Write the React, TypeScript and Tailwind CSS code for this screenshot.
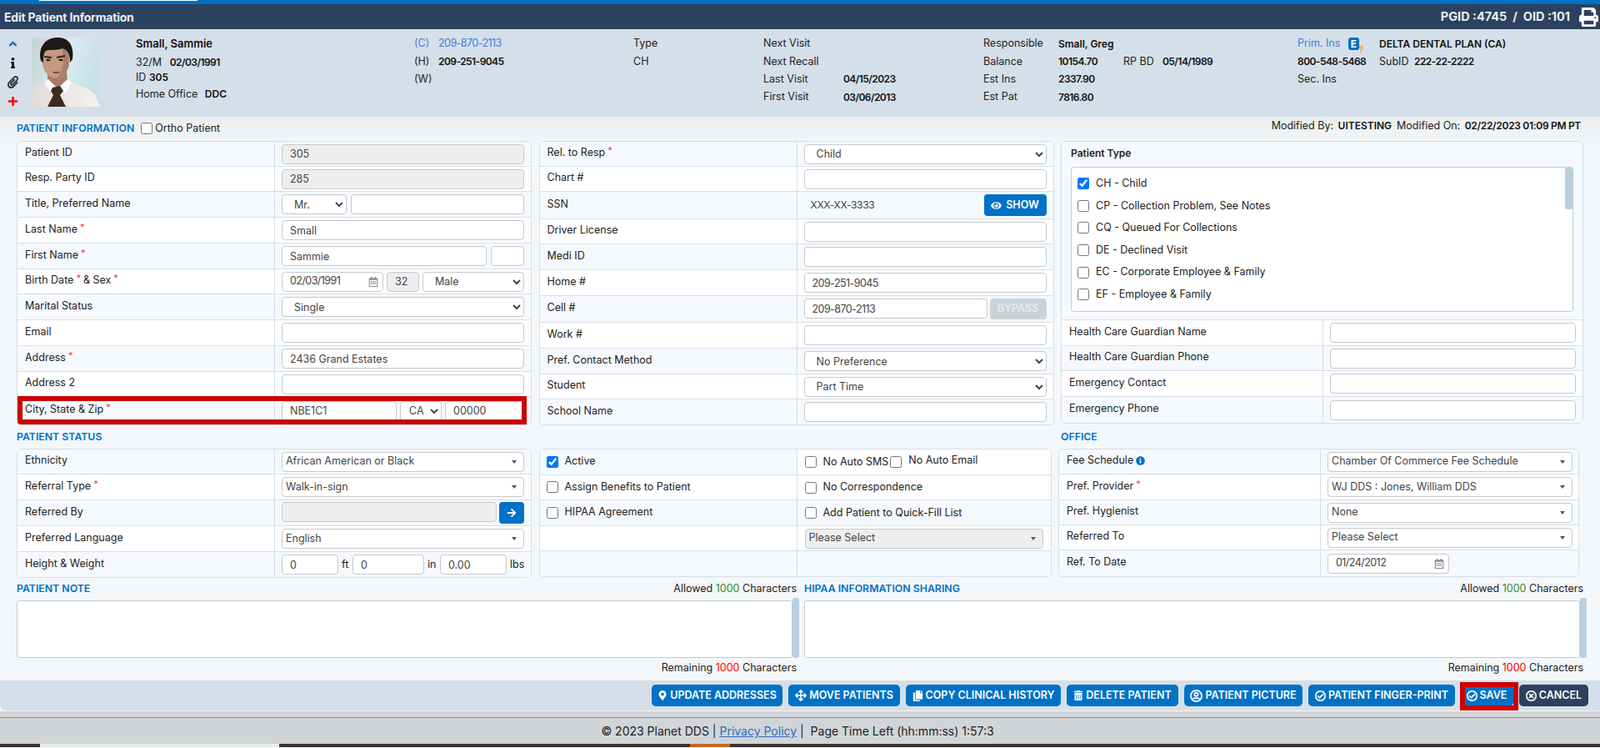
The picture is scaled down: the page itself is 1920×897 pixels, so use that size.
import type { ReactNode } from "react";
import {
  FaAngleUp,
  FaArrowRight,
  FaArrowsAlt,
  FaCopy,
  FaEye,
  FaInfo,
  FaInfoCircle,
  FaMapMarkerAlt,
  FaPaperclip,
  FaPlus,
  FaPrint,
  FaRegCalendarAlt,
  FaRegCheckCircle,
  FaRegTimesCircle,
  FaRegUserCircle,
  FaTrashAlt,
} from "react-icons/fa";

const inputCls =
  "h-[24px] rounded-[4px] border border-[#c6cacd] px-[9px] text-[12.5px] text-[#444] outline-none";
// Inter digits run wider than the original font's
const tight = "tracking-[-0.55px]";

function Req() {
  return <span className="relative -top-[3px] ml-[3px] text-[11px] text-[#e8413c]">*</span>;
}

function Row({
  h,
  label,
  labelW,
  shade,
  last,
  children,
  className = "",
}: {
  h: number;
  label: ReactNode;
  labelW: string;
  shade?: boolean;
  last?: boolean;
  children?: ReactNode;
  className?: string;
}) {
  return (
    <div
      className={`flex ${labelW} ${shade ? "bg-[#f5f9fd]" : "bg-white"} ${last ? "" : "border-b border-[#d5dfe9]"} ${className}`}
      style={{ height: h }}
    >
      <div className="flex shrink-0 items-center border-r border-[#d5dfe9] pb-[2px] pl-[9px] text-[12.5px] text-[#222] [width:var(--lw)]">
        {label}
      </div>
      <div className="flex min-w-0 flex-1 items-center pl-[8px]">{children}</div>
    </div>
  );
}

function Text({ w, value = "", disabled, num }: { w: string; value?: string; disabled?: boolean; num?: boolean }) {
  return (
    <input
      readOnly
      value={value}
      className={`${inputCls} ${w} ${disabled ? "bg-[#eeeeee]" : "bg-white"} ${num ? tight : ""}`}
    />
  );
}

function Native({ w, value, pad = "pl-[10px]" }: { w: string; value: string; pad?: string }) {
  return (
    <select defaultValue={value} className={`h-[24px] rounded-[4px] border border-[#c6cacd] bg-white pr-[2px] text-[12.5px] text-[#444] outline-none ${w} ${pad}`}>
      <option>{value}</option>
    </select>
  );
}

// bootstrap-select style dropdown with a small caret
function Picker({ w, value, disabled }: { w: string; value: string; disabled?: boolean }) {
  return (
    <div
      className={`flex h-[24px] items-center justify-between rounded-[4px] border border-[#c6cacd] pl-[4px] pr-[8px] text-[12.5px] text-[#444] ${w} ${disabled ? "bg-[#eeeeee]" : "bg-white"}`}
    >
      <span className="truncate">{value}</span>
      <span className="h-0 w-0 border-x-[3.5px] border-t-[4px] border-x-transparent border-t-[#555]" />
    </div>
  );
}

function DateInput({ w, value }: { w: string; value: string }) {
  return (
    <div className={`flex h-[24px] items-center justify-between rounded-[4px] border border-[#c6cacd] bg-white pl-[9px] pr-[5px] text-[12.5px] text-[#444] ${w}`}>
      <span className={tight}>{value}</span>
      <FaRegCalendarAlt className="text-[12px] text-[#888]" />
    </div>
  );
}

function Check({ checked, label, className = "" }: { checked?: boolean; label: string; className?: string }) {
  return (
    <label className={`flex items-center gap-[8px] text-[12.5px] text-[#222] ${className}`}>
      <input type="checkbox" defaultChecked={checked} className="h-[14px] w-[14px] accent-[#0075ff]" />
      <span>{label}</span>
    </label>
  );
}

function Title({ children }: { children: ReactNode }) {
  return <span className="text-[12.3px] font-semibold text-[#0071c5]">{children}</span>;
}

function Photo() {
  return (
    <svg viewBox="0 0 82 83" className="h-[83px] w-[82px]">
      <defs>
        <linearGradient id="bg" x1="0" y1="0" x2="1" y2="0.3">
          <stop offset="0" stopColor="#c3d3d3" />
          <stop offset="0.55" stopColor="#d9ebf0" />
          <stop offset="1" stopColor="#c8e0e8" />
        </linearGradient>
        <linearGradient id="shirt" x1="0" y1="0" x2="1" y2="0">
          <stop offset="0" stopColor="#e2dcd8" />
          <stop offset="1" stopColor="#f4f1ee" />
        </linearGradient>
      </defs>
      <rect width="82" height="83" fill="url(#bg)" />
      <path d="M0 83V63C6 58 14 55 20 50L30 52 43 50C53 56 68 60 76 68L82 83Z" fill="url(#shirt)" />
      <path d="M19 36V54L30 63 43 51 41 34Z" fill="#a87c66" />
      <ellipse cx="29" cy="27" rx="16.5" ry="22" fill="#c39a84" />
      <path d="M36 12C44 16 46 26 44 36 41 44 36 48 30 49 38 42 40 26 36 12Z" fill="#a97f6a" />
      <path d="M11 28C7 10 18 0 31 0 45 0 51 10 49 26L46 30C46 20 43 15 37 13 29 16 20 14 17 16 14 19 14 24 14 30Z" fill="#1e1916" />
      <path d="M15 22l9 1v2l-9-1zM30 23l10-2v2l-10 2z" fill="#2b211c" />
      <ellipse cx="20" cy="27" rx="2.6" ry="1.3" fill="#2b211c" />
      <ellipse cx="35" cy="27" rx="2.6" ry="1.3" fill="#2b211c" />
      <path d="M25 41h9l-1 2h-7z" fill="#7f4f42" />
      <path d="M20 50L30 60 24 67 15 54ZM43 50L32 60 41 67 48 54Z" fill="#fbfaf8" />
      <path d="M25 60L34 58 38 64 34 69 41 83H19L26 69 23 64Z" fill="#3f2a1f" />
    </svg>
  );
}

function InfoCol({ w, children }: { w: string; children: ReactNode }) {
  return <div className={`flex shrink-0 flex-col pt-[7px] ${w}`}>{children}</div>;
}

function InfoLine({ children }: { children: ReactNode }) {
  return <div className="flex h-[21.4px] items-center whitespace-nowrap text-[12.5px] text-[#222]">{children}</div>;
}

function B({ className = "", children }: { className?: string; children: ReactNode }) {
  return <span className={`text-[12px] font-semibold text-[#111] ${className}`}>{children}</span>;
}

function PatientBar() {
  return (
    <div className="flex h-[105px] bg-[#d5dfe9]">
      <div className="flex h-full w-[38px] shrink-0 flex-col items-center gap-[9px] pr-[7px] pt-[10px]">
        <FaAngleUp className="text-[15px] text-[#0071c5]" />
        <FaInfo className="text-[13px] text-[#111]" />
        <FaPaperclip className="text-[15px] text-[#333]" />
        <FaPlus className="text-[13px] text-[#ff0000]" />
      </div>
      <div className="w-[82px] shrink-0 pt-[10px]">
        <Photo />
      </div>
      <div className="ml-[43px] flex w-[334px] shrink-0 flex-col pt-[7px] text-[12.5px] text-[#222]">
        <span className="h-[20px] text-[13px] font-semibold leading-[20px] text-[#111]">Small, Sammie</span>
        <span className="mt-[3px] h-[20px] leading-[20px]">
          32/M <B className={`ml-[6px] ${tight}`}>02/03/1991</B>
        </span>
        <span className="-mt-px h-[17px] leading-[17px]">
          ID <B>305</B>
        </span>
        <span className="mt-[3px] h-[17px] leading-[17px]">
          Home Office <B className="ml-[5px]">DDC</B>
        </span>
      </div>
      <InfoCol w="w-[263px]">
        <InfoLine>
          <span className="w-[29px] text-[#3f7fd6]">(C)</span>
          <span className={`text-[#3f7fd6] ${tight}`}>209-870-2113</span>
        </InfoLine>
        <InfoLine>
          <span className="w-[29px]">(H)</span>
          <B className={tight}>209-251-9045</B>
        </InfoLine>
        <InfoLine>(W)</InfoLine>
      </InfoCol>
      <InfoCol w="w-[156px]">
        <InfoLine>Type</InfoLine>
        <InfoLine>CH</InfoLine>
      </InfoCol>
      <InfoCol w="w-[264px]">
        <InfoLine>Next Visit</InfoLine>
        <InfoLine>Next Recall</InfoLine>
        <InfoLine>
          <span className="w-[96px]">Last Visit</span>
          <B className={tight}>04/15/2023</B>
        </InfoLine>
        <InfoLine>
          <span className="w-[96px]">First Visit</span>
          <B className={tight}>03/06/2013</B>
        </InfoLine>
      </InfoCol>
      <InfoCol w="w-[377px]">
        <InfoLine>
          <span className="w-[90px]">Responsible</span>
          <B>Small, Greg</B>
        </InfoLine>
        <InfoLine>
          <span className="w-[90px]">Balance</span>
          <B className={`w-[78px] ${tight}`}>10154.70</B>
          <span className="w-[47px]">RP BD</span>
          <B className={tight}>05/14/1989</B>
        </InfoLine>
        <InfoLine>
          <span className="w-[90px]">Est Ins</span>
          <B className={tight}>2337.90</B>
        </InfoLine>
        <InfoLine>
          <span className="w-[90px]">Est Pat</span>
          <B className={tight}>7816.80</B>
        </InfoLine>
      </InfoCol>
      <InfoCol w="flex-1">
        <InfoLine>
          <span className="w-[61px] text-[#3f7fd6]">Prim. Ins</span>
          <span className="relative flex h-[15px] w-[13px] items-center justify-center rounded-[3px] bg-[#0071c5] text-[12px] font-bold leading-none text-white">
            E
            <span className="absolute -bottom-[4px] -right-[5px] text-[10px] font-bold leading-none text-[#f0a020]">?</span>
          </span>
          <B className="ml-[24px]">DELTA DENTAL PLAN (CA)</B>
        </InfoLine>
        <InfoLine>
          <B className={`w-[98px] ${tight}`}>800-548-5468</B>
          <span className="w-[42px]">SubID</span>
          <B className={tight}>222-22-2222</B>
        </InfoLine>
        <InfoLine>Sec. Ins</InfoLine>
      </InfoCol>
    </div>
  );
}

function PatientCard() {
  const lw = "[--lw:309px]";
  return (
    <div className="overflow-hidden rounded-[5px] border border-[#d5dfe9]">
      <Row h={30} label="Patient ID" labelW={lw} shade>
        <Text w="w-[291px]" value="305" disabled />
      </Row>
      <Row h={30} label="Resp. Party ID" labelW={lw}>
        <Text w="w-[291px]" value="285" disabled />
      </Row>
      <Row h={31} label="Title, Preferred Name" labelW={lw} shade>
        <div className="flex gap-[5px]">
          <Native w="w-[78px]" value="Mr." />
          <Text w="w-[208px]" />
        </div>
      </Row>
      <Row h={31} label={<>Last Name<Req /></>} labelW={lw}>
        <Text w="w-[291px]" value="Small" />
      </Row>
      <Row h={31} label={<>First Name<Req /></>} labelW={lw} shade>
        <div className="flex gap-[5px]">
          <Text w="w-[246px]" value="Sammie" />
          <Text w="w-[40px]" />
        </div>
      </Row>
      <Row h={30} label={<>Birth Date<Req /> <span className="ml-[3px]">&amp; Sex</span><Req /></>} labelW={lw}>
        <div className="flex gap-[4px]">
          <DateInput w="w-[122px]" value="02/03/1991" />
          <Text w="w-[39px]" value="32" disabled />
          <Native w="w-[122px]" value="Male" />
        </div>
      </Row>
      <Row h={31} label="Marital Status" labelW={lw} shade>
        <Native w="w-[291px]" value="Single" />
      </Row>
      <Row h={31} label="Email" labelW={lw}>
        <Text w="w-[291px]" />
      </Row>
      <Row h={31} label={<>Address<Req /></>} labelW={lw} shade>
        <Text w="w-[291px]" value="2436 Grand Estates" />
      </Row>
      <Row h={30} label="Address 2" labelW={lw}>
        <Text w="w-[291px]" />
      </Row>
      <Row h={33} last label={<>City, State &amp; Zip<Req /></>} labelW={lw} shade className="relative">
        <div className="flex gap-[4px]">
          <Text w="w-[138px]" value="NBE1C1" />
          <Native w="w-[50px]" value="CA" pad="pl-[6px]" />
          <Text w="w-[94px]" value="00000" />
        </div>
        <div className="absolute -top-px bottom-0 left-0 right-[5px] border-[6px] border-[#cc0000]" />
      </Row>
    </div>
  );
}

function ContactCard() {
  const lw = "[--lw:309px]";
  return (
    <div className="overflow-hidden rounded-[5px] border border-[#d5dfe9]">
      <Row h={30} label={<>Rel. to Resp<Req /></>} labelW={lw} shade>
        <Native w="w-[291px]" value="Child" />
      </Row>
      <Row h={30} label="Chart #" labelW={lw}>
        <Text w="w-[291px]" />
      </Row>
      <Row h={33} label="SSN" labelW={lw} shade>
        <div className="flex w-[291px] items-center justify-between pl-[8px]">
          <span className="text-[12px] tracking-[-0.3px] text-[#444]">XXX-XX-3333</span>
          <button className="flex h-[26px] w-[75px] items-center justify-center gap-[5px] rounded-[4px] bg-[#0071c5] text-[12.5px] font-semibold text-white">
            <FaEye className="text-[13px]" /> SHOW
          </button>
        </div>
      </Row>
      <Row h={30} label="Driver License" labelW={lw}>
        <Text w="w-[291px]" />
      </Row>
      <Row h={31} label="Medi ID" labelW={lw} shade>
        <Text w="w-[291px]" />
      </Row>
      <Row h={31} label="Home #" labelW={lw}>
        <Text w="w-[291px]" value="209-251-9045" num />
      </Row>
      <Row h={32} label="Cell #" labelW={lw} shade>
        <div className="flex gap-[3px]">
          <Text w="w-[220px]" value="209-870-2113" num />
          <button className="h-[25px] w-[68px] rounded-[4px] bg-[#ccd3d8] text-[12.5px] font-semibold text-[#e6eaed]">
            BYPASS
          </button>
        </div>
      </Row>
      <Row h={31} label="Work #" labelW={lw}>
        <Text w="w-[291px]" />
      </Row>
      <Row h={31} label="Pref. Contact Method" labelW={lw} shade>
        <Native w="w-[291px]" value="No Preference" />
      </Row>
      <Row h={30} label="Student" labelW={lw}>
        <Native w="w-[291px]" value="Part Time" />
      </Row>
      <Row h={30} last label="School Name" labelW={lw} shade>
        <Text w="w-[291px]" />
      </Row>
    </div>
  );
}

const patientTypes = [
  "CH - Child",
  "CP - Collection Problem, See Notes",
  "CQ - Queued For Collections",
  "DE - Declined Visit",
  "EC - Corporate Employee & Family",
  "EF - Employee & Family",
];

function TypeCard() {
  const lw = "[--lw:314px]";
  return (
    <div className="overflow-hidden rounded-[5px] border border-[#d5dfe9]">
      <div className="h-[214px] border-b border-[#d5dfe9] bg-[#f5f9fd] pl-[11px] pr-[11px] pt-[5px]">
        <div className="text-[12px] font-semibold text-[#222]">Patient Type</div>
        <div className="mt-[7px] flex h-[174px] rounded-[4px] border border-[#c6cacd] bg-white">
          <div className="flex-1 pl-[7px] pt-[6px]">
            {patientTypes.map((t, i) => (
              <Check key={t} checked={i === 0} label={t} className="h-[26.6px]" />
            ))}
          </div>
          <div className="h-[50px] w-[9px] rounded-[3px] bg-[#b9cfe0]" />
        </div>
      </div>
      <Row h={31} label="Health Care Guardian Name" labelW={lw}>
        <Text w="w-[295px]" />
      </Row>
      <Row h={30} label="Health Care Guardian Phone" labelW={lw} shade>
        <Text w="w-[295px]" />
      </Row>
      <Row h={31} label="Emergency Contact" labelW={lw}>
        <Text w="w-[295px]" />
      </Row>
      <Row h={31} last label="Emergency Phone" labelW={lw} shade>
        <Text w="w-[295px]" />
      </Row>
    </div>
  );
}

function StatusCard() {
  const lw = "[--lw:309px]";
  return (
    <div className="overflow-hidden rounded-[5px] border border-[#d5dfe9]">
      <Row h={30} label="Ethnicity" labelW={lw} shade>
        <Picker w="w-[291px]" value="African American or Black" />
      </Row>
      <Row h={31} label={<>Referral Type<Req /></>} labelW={lw}>
        <Picker w="w-[291px]" value="Walk-in-sign" />
      </Row>
      <Row h={31} label="Referred By" labelW={lw} shade>
        <div className="flex gap-[3px]">
          <Text w="w-[258px]" disabled />
          <button className="flex h-[26px] w-[30px] items-center justify-center rounded-[4px] bg-[#0071c5] text-[12px] text-white">
            <FaArrowRight />
          </button>
        </div>
      </Row>
      <Row h={31} label="Preferred Language" labelW={lw}>
        <Picker w="w-[291px]" value="English" />
      </Row>
      <Row h={30} last label="Height & Weight" labelW={lw} shade>
        <div className="flex items-center text-[12.5px] text-[#222]">
          <Text w="w-[68px]" value="0" />
          <span className="w-[17px] pl-[4px]">ft</span>
          <Text w="w-[86px]" value="0" />
          <span className="w-[19px] pl-[4px]">in</span>
          <Text w="w-[80px]" value="0.00" />
          <span className="pl-[4px]">lbs</span>
        </div>
      </Row>
    </div>
  );
}

function FlagsCard() {
  const cols = "grid grid-cols-[309px_1fr]";
  const cell = "flex items-center border-r border-[#d5dfe9] pl-[8px] pb-[1px]";
  const right = "flex items-center pl-[9px]";
  return (
    <div className="overflow-hidden rounded-[5px] border border-[#d5dfe9]">
      <div className={`${cols} h-[31px] border-b border-[#d5dfe9] bg-[#f5f9fd]`}>
        <div className={cell}>
          <Check checked label="Active" />
        </div>
        <div className={`${right} bg-white`}>
          <Check label="No Auto SMS" />
          <label className="ml-[2px] flex items-center gap-[8px] text-[12.5px] text-[#222]">
            <input type="checkbox" className="h-[14px] w-[14px]" />
            <span className="-mt-[3px]">No Auto Email</span>
          </label>
        </div>
      </div>
      <div className={`${cols} h-[30px] border-b border-[#d5dfe9] bg-white`}>
        <div className={cell}>
          <Check label="Assign Benefits to Patient" />
        </div>
        <div className={right}>
          <Check label="No Correspondence" />
        </div>
      </div>
      <div className={`${cols} h-[31px] border-b border-[#d5dfe9] bg-[#f5f9fd]`}>
        <div className={cell}>
          <Check label="HIPAA Agreement" />
        </div>
        <div className={right}>
          <Check label="Add Patient to Quick-Fill List" />
        </div>
      </div>
      <div className={`${cols} h-[30px] border-b border-[#d5dfe9] bg-white`}>
        <div className={cell} />
        <div className={right}>
          <Picker w="w-[286px]" value="Please Select" disabled />
        </div>
      </div>
      <div className={`${cols} h-[30px] bg-[#f5f9fd]`}>
        <div className={cell} />
        <div className={right} />
      </div>
    </div>
  );
}

function OfficeCard() {
  const lw = "[--lw:314px]";
  return (
    <div className="overflow-hidden rounded-[5px] border border-[#d5dfe9]">
      <Row
        h={30}
        label={
          <span className="flex items-center gap-[3px]">
            Fee Schedule <FaInfoCircle className="text-[11px] text-[#0071c5]" />
          </span>
        }
        labelW={lw}
        shade
      >
        <Picker w="w-[294px]" value="Chamber Of Commerce Fee Schedule" />
      </Row>
      <Row h={31} label={<>Pref. Provider<Req /></>} labelW={lw}>
        <Picker w="w-[294px]" value="WJ DDS : Jones, William DDS" />
      </Row>
      <Row h={30} label="Pref. Hygienist" labelW={lw} shade>
        <Picker w="w-[294px]" value="None" />
      </Row>
      <Row h={30} label="Referred To" labelW={lw}>
        <Picker w="w-[294px]" value="Please Select" />
      </Row>
      <Row h={31} last label="Ref. To Date" labelW={lw} shade>
        <DateInput w="w-[146px]" value="01/24/2012" />
      </Row>
    </div>
  );
}

function Counter({ prefix, color }: { prefix: string; color: string }) {
  return (
    <span className="text-[12.5px] text-[#222]">
      {prefix} <span className={color}>1000</span> Characters
    </span>
  );
}

function Note({ className = "" }: { className?: string }) {
  return (
    <div className={`flex ${className}`}>
      <textarea readOnly className="h-[69px] flex-1 resize-none rounded-[3px] border border-[#c6cacd] bg-white" />
      <div className="-mt-[3px] h-[72px] w-[8px] rounded-[3px] bg-[#b9cfe0]" />
    </div>
  );
}

function ActionButton({ icon, label, w, dark }: { icon: ReactNode; label: string; w: string; dark?: boolean }) {
  return (
    <button
      className={`flex h-[26px] shrink-0 items-center justify-center gap-[3px] rounded-[5px] text-[12.5px] font-semibold text-white ${w} ${dark ? "bg-[#2c415e]" : "bg-[#0071c5]"}`}
    >
      {icon}
      {label}
    </button>
  );
}

export default function App() {
  return (
    <div className="flex h-[897px] w-[1920px] flex-col overflow-hidden bg-white [font-family:Inter,sans-serif]">
      <div className="h-[5px] shrink-0 bg-[#0071c5]">
        <div className="ml-[47px] h-px w-[190px] bg-white" />
      </div>
      <div className="flex h-[30px] shrink-0 items-center justify-between bg-[#2c415e] pl-[5px] pr-[2px] font-bold text-[#e8edf2] [font-family:'Liberation_Sans',sans-serif]">
        <span className="text-[14px] tracking-[-0.2px]">Edit Patient Information</span>
        <div className="flex items-center gap-[11px]">
          <span className="text-[14.5px]">PGID :4745&nbsp; /&nbsp; OID :101</span>
          <FaPrint className="text-[23px] text-white" />
        </div>
      </div>
      <PatientBar />

      <div className="flex flex-col bg-[#f4f7f9] bg-gradient-to-b from-[#ebeeee] from-0% to-[#f4f7f9] to-[5%] pl-[20px]">
        <div className="flex h-[29px] items-start justify-between pr-[23px]">
          <div className="flex items-center gap-[8px] pt-[5px]">
            <Title>PATIENT INFORMATION</Title>
            <label className="flex items-center gap-[3px] text-[12.5px] text-[#222]">
              <input type="checkbox" className="h-[14px] w-[14px]" />
              Ortho Patient
            </label>
          </div>
          <div className="pt-[2px] text-[12.5px] text-[#222]">
            Modified By: <B className="ml-[2px]">UITESTING</B>
            <span className="ml-[6px]">Modified On:</span> <B className={`ml-[2px] tracking-[-0.3px]`}>02/22/2023 01:09 PM PT</B>
          </div>
        </div>

        <div className="grid h-[340px] grid-cols-[618px_618px_627px] items-start gap-x-[8.5px]">
          <PatientCard />
          <ContactCard />
          <TypeCard />
        </div>

        <div className="grid h-[29px] grid-cols-[618px_615px_625px] gap-x-[8.5px] pt-[6px]">
          <Title>PATIENT STATUS</Title>
          <span />
          <div className="flex pl-[3px]">
            <Title>OFFICE</Title>
          </div>
        </div>

        <div className="grid h-[153px] grid-cols-[618px_615px_625px] items-start gap-x-[8.5px]">
          <StatusCard />
          <FlagsCard />
          <OfficeCard />
        </div>

        <div className="grid h-[29px] grid-cols-[936px_935px] gap-x-[9px] pt-[6px]">
          <div className="flex items-start justify-between">
            <Title>PATIENT NOTE</Title>
            <Counter prefix="Allowed" color="text-[#2e8b2e]" />
          </div>
          <div className="flex items-start justify-between">
            <Title>HIPAA INFORMATION SHARING</Title>
            <Counter prefix="Allowed" color="text-[#2e8b2e]" />
          </div>
        </div>

        <div className="grid grid-cols-[939px_939px] gap-x-[6px]">
          <Note />
          <Note />
        </div>

        <div className="grid h-[27px] grid-cols-[936px_935px] gap-x-[9px] pt-[3px] text-right">
          <Counter prefix="Remaining" color="text-[#ff0000]" />
          <Counter prefix="Remaining" color="text-[#ff0000]" />
        </div>
      </div>

      <div className="flex h-[36px] shrink-0 items-start justify-end rounded-bl-[6px] bg-[#d5dfe9] pr-[14px] pt-[5px]">
        <div className="flex gap-[7px]">
          <ActionButton icon={<FaMapMarkerAlt className="text-[12px]" />} label="UPDATE ADDRESSES" w="w-[157px]" />
          <ActionButton icon={<FaArrowsAlt className="text-[14px]" />} label="MOVE PATIENTS" w="w-[134px]" />
          <ActionButton icon={<FaCopy className="text-[13px]" />} label="COPY CLINICAL HISTORY" w="w-[186px]" />
          <ActionButton icon={<FaTrashAlt className="text-[12px]" />} label="DELETE PATIENT" w="w-[134px]" />
          <ActionButton icon={<FaRegUserCircle className="text-[15px]" stroke="currentColor" strokeWidth={16} />} label="PATIENT PICTURE" w="w-[142px]" />
          <ActionButton icon={<FaRegCheckCircle className="text-[13px]" stroke="currentColor" strokeWidth={24} />} label="PATIENT FINGER-PRINT" w="w-[176px]" />
        </div>
        <div className="relative ml-[6px] w-[70px]">
          <ActionButton icon={<FaRegCheckCircle className="text-[13px]" stroke="currentColor" strokeWidth={24} />} label="SAVE" w="w-[64px]" />
          <div className="absolute -top-[3px] left-0 right-0 h-[34px] border-[6px] border-[#cc0000]" />
        </div>
        <div className="ml-px">
          <ActionButton icon={<FaRegTimesCircle className="text-[13px]" stroke="currentColor" strokeWidth={24} />} label="CANCEL" w="w-[83px]" dark />
        </div>
      </div>

      <div className="h-[9px] shrink-0 border-b border-[#8c8f92] bg-[#d1d5d8] [border-top:1px_solid_#f4f7f9]" />
      <div className="flex h-[31px] shrink-0 items-center justify-center bg-[#d1d5d8] pr-[6px] text-[14px] text-[#222] [font-family:'Liberation_Sans',sans-serif]">
        © 2023 Planet DDS |&nbsp;<a className="text-[#2a6fc0] underline">Privacy Policy</a>&nbsp;|&nbsp; Page Time Left (hh:mm:ss) 1:57:3
      </div>
      <div className="flex h-[4px] shrink-0 bg-[#3a3230]">
        <div className="ml-[48px] w-[287px] bg-[#e8eaec]" />
        <div className="ml-[493px] w-[48px] bg-[#c46a20]" />
      </div>
    </div>
  );
}
